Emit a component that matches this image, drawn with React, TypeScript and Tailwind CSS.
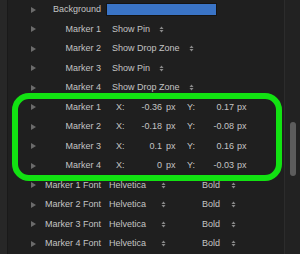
const font = { fontFamily: '"Liberation Sans", Arial, sans-serif' };

function Tri({ show = true }: { show?: boolean }) {
  return (
    <span className="w-[5px] flex items-center">
      {show && (
        <svg width="5" height="6" viewBox="0 0 5 6">
          <path d="M0 0 L5 3 L0 6 Z" fill="#6b6b6b" />
        </svg>
      )}
    </span>
  );
}

function Stepper() {
  return (
    <svg width="5" height="7" viewBox="0 0 5 7" className="shrink-0">
      <path d="M0.5 3 L2.5 0.5 L4.5 3 Z" fill="#8a8a8a" />
      <path d="M0.5 4 L2.5 6.5 L4.5 4 Z" fill="#8a8a8a" />
    </svg>
  );
}

function Row({ tri, label, children }: { tri?: boolean; label: string; children: React.ReactNode }) {
  return (
    <div className="flex items-center h-[19.5px] pl-[23px] text-[9px] text-[#c4c4c4] whitespace-nowrap">
      <Tri show={tri} />
      <span className="w-[65px] text-right">{label}</span>
      {children}
    </div>
  );
}

function Popup({ text, w, ml }: { text: string; w: string; ml: string }) {
  return (
    <span className={`flex items-center ${ml}`}>
      <span className={w}>{text}</span>
      <Stepper />
    </span>
  );
}

const markers = ["Show Pin", "Show Drop Zone", "Show Pin", "Show Drop Zone"];
const xy = [
  ["-0.36", "0.17"],
  ["-0.18", "-0.08"],
  ["0.1", "0.16"],
  ["0", "-0.03"],
];

export default function App() {
  return (
    <div className="flex w-[300px] h-[254px] overflow-hidden bg-[#1f1f1f]" style={font}>
      <div className="w-[8px] bg-[#272727] border-r border-[#191919]" />
      <div className="relative w-[276px] bg-[#1f1f1f]">
        <Row tri label="Background">
          <span className="ml-[5px] w-[111px] h-[13px] bg-[#3a74c6] border border-[#141414]" />
        </Row>
        {markers.map((m, i) => (
          <Row key={i} label={`Marker ${i + 1}`}>
            <span className="ml-[11px] flex items-center">
              <span className={m === "Show Pin" ? "w-[47px]" : "w-[77px]"}>{m}</span>
              <Stepper />
            </span>
          </Row>
        ))}
        {xy.map(([x, y], i) => (
          <Row key={i} tri label={`Marker ${i + 1}`}>
            <span className="ml-[15px] w-[12px]">X:</span>
            <span className="w-[34px] text-right">{x}</span>
            <span className="ml-[4px] w-[21px]">px</span>
            <span className="w-[12px]">Y:</span>
            <span className="w-[35px] text-right">{y}</span>
            <span className="ml-[3px]">px</span>
          </Row>
        ))}
        {[1, 2, 3, 4].map((n) => (
          <Row key={n} tri label={`Marker ${n} Font`}>
            <Popup text="Helvetica" w="w-[52px]" ml="ml-[8px]" />
            <Popup text="Bold" w="w-[29px]" ml="ml-[36px]" />
          </Row>
        ))}
        <div className="absolute left-[4px] top-[93px] w-[270px] h-[88px] border-[6px] border-[#12e212] rounded-[17px]" />
      </div>
      <div className="flex-1 border-l border-[#2c2c2c] bg-[#222222] pt-[122px] pl-[5px]">
        <div className="w-[6px] h-[54px] rounded-full bg-[#5c5c5c]" />
      </div>
    </div>
  );
}
